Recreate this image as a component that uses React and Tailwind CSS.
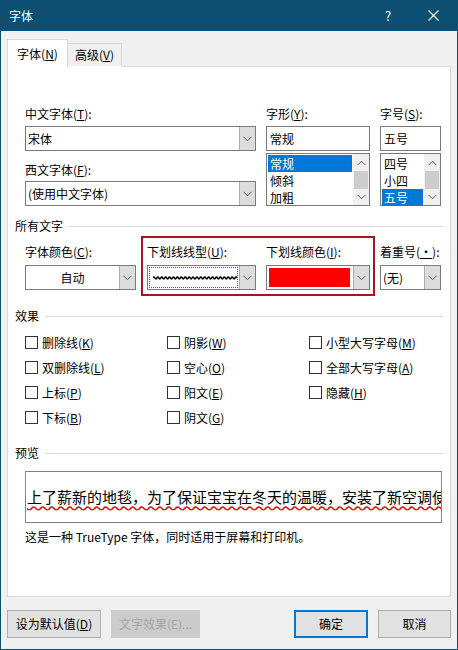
import React from "react";

const FONT = "'Noto Sans CJK SC', 'Noto Sans', sans-serif";

function Chevron({ className = "" }) {
  return (
    <svg width="9" height="6" viewBox="0 0 9 6" className={className}>
      <path d="M0.5 0.8 L4.5 4.8 L8.5 0.8" fill="none" stroke="#606060" strokeWidth="1" />
    </svg>
  );
}

function Combo({ children, center = false, focus = false }) {
  return (
    <div className="h-[25px] flex border border-[#7a7a7a] bg-white">
      <div
        className={
          "flex-1 flex items-center min-w-0 " +
          (center ? "justify-center " : "pl-[2px] ") +
          (focus ? "m-[1px] border border-dotted border-[#1f5fa8]" : "")
        }
      >
        {children}
      </div>
      <div className="w-[16px] bg-[#dcdcdc] border-l border-[#adadad] flex items-center justify-center">
        <Chevron />
      </div>
    </div>
  );
}

function Label({ children }) {
  return <div className="h-[16px] leading-[16px] whitespace-nowrap">{children}</div>;
}

function Scroll() {
  return (
    <div className="w-[16px] flex flex-col bg-[#f0f0f0]">
      <div className="h-[17px] flex items-center justify-center">
        <Chevron className="rotate-180" />
      </div>
      <div className="h-[18px] mx-[1px] bg-[#cdcdcd]" />
      <div className="flex-1 flex items-center justify-center">
        <Chevron />
      </div>
    </div>
  );
}

function ListBox({ items, selected, itemWidth }) {
  return (
    <div className="h-[53px] flex border border-[#7a7a7a] bg-white">
      <div className="flex-1 pt-[1px] pl-[1px]">
        {items.map((it, i) => (
          <div
            key={it}
            className={
              "h-[17px] leading-[17px] pl-[2px] " +
              (i === selected ? "bg-[#0078d7] text-white " : "") +
              itemWidth
            }
          >
            {it}
          </div>
        ))}
      </div>
      <Scroll />
    </div>
  );
}

function Section({ title }) {
  return (
    <div className="h-[16px] flex items-center pr-[7px]">
      <span className="leading-[16px]">{title}</span>
      <div className="flex-1 h-px bg-[#dcdcdc] ml-[6px]" />
    </div>
  );
}

function Check({ children }) {
  return (
    <div className="h-[25px] flex items-center whitespace-nowrap">
      <div className="w-[13px] h-[13px] border border-[#333] bg-white mr-[4px]" />
      <span>{children}</span>
    </div>
  );
}

function Btn({ children, className = "" }) {
  return (
    <div className={"h-[28px] flex items-center justify-center border " + className}>
      {children}
    </div>
  );
}

export default function App() {
  return (
    <div
      className="w-[458px] h-[650px] bg-[#f0f0f0] border-x border-b border-[#0c4f72] flex flex-col text-[12px] text-black overflow-hidden"
      style={{ fontFamily: FONT }}
    >
      {/* title bar */}
      <div className="h-[31px] -mx-px bg-[#0c4f72] text-white flex items-center pl-[9px] shrink-0">
        <span className="flex-1">字体</span>
        <span className="w-[14px] text-center mr-[33px] text-[13px]">?</span>
        <svg width="11" height="11" viewBox="0 0 11 11" className="mr-[19px]">
          <path d="M0.5 0.5 L10.5 10.5 M10.5 0.5 L0.5 10.5" stroke="#fff" strokeWidth="1.1" />
        </svg>
      </div>

      <div className="px-[6px] pt-[8px] flex flex-col">
        {/* tabs */}
        <div className="flex items-end h-[28px] relative z-10 -mb-px">
          <div className="h-[28px] w-[61px] bg-white border border-b-0 border-[#d9d9d9] flex items-center justify-center">
            字体(<u>N</u>)
          </div>
          <div className="h-[24px] w-[54px] bg-[#f0f0f0] border border-l-0 border-[#d9d9d9] border-b-white flex items-center justify-center">
            高级(<u>V</u>)
          </div>
        </div>

        {/* panel */}
        <div className="h-[531px] bg-white border border-[#d9d9d9] pl-[7px] pt-[39px]">
          <div className="ml-[10px] flex gap-[10px]">
            <div className="w-[231px] flex flex-col">
              <Label>中文字体(<u>T</u>):</Label>
              <div className="mt-[4px]">
                <Combo>宋体</Combo>
              </div>
              <div className="mt-[11px]">
                <Label>西文字体(<u>F</u>):</Label>
              </div>
              <div className="mt-[3px]">
                <Combo>(使用中文字体)</Combo>
              </div>
            </div>
            <div className="w-[104px] flex flex-col">
              <Label>字形(<u>Y</u>):</Label>
              <div className="mt-[4px] h-[25px] border border-[#7a7a7a] flex items-center pl-[3px]">常规</div>
              <div className="mt-[2px]">
                <ListBox items={["常规", "倾斜", "加粗"]} selected={0} itemWidth="w-[84px]" />
              </div>
            </div>
            <div className="w-[61px] flex flex-col">
              <Label>字号(<u>S</u>):</Label>
              <div className="mt-[4px] h-[25px] border border-[#7a7a7a] flex items-center pl-[3px]">五号</div>
              <div className="mt-[2px]">
                <ListBox items={["四号", "小四", "五号"]} selected={2} itemWidth="w-[41px]" />
              </div>
            </div>
          </div>

          <div className="mt-[12px]">
            <Section title="所有文字" />
          </div>

          <div className="mt-[2px] ml-[10px] flex items-start gap-[5px]">
            <div className="w-[111px] pt-[8px]">
              <Label>字体颜色(<u>C</u>):</Label>
              <div className="mt-[5px]">
                <Combo center>自动</Combo>
              </div>
            </div>
            <div className="border-2 border-[#a5161e] pl-[4px] pr-[3px] pt-[6px] pb-[4px] flex gap-[10px]">
              <div className="w-[109px]">
                <Label>下划线线型(<u>U</u>):</Label>
                <div className="mt-[5px]">
                  <Combo focus>
                    <svg width="86" height="6" viewBox="0 0 86 6" className="ml-[1px]">
                      <path
                        d="M0 3 q1 -2 2 0 t2 0 t2 0 t2 0 t2 0 t2 0 t2 0 t2 0 t2 0 t2 0 t2 0 t2 0 t2 0 t2 0 t2 0 t2 0 t2 0 t2 0 t2 0 t2 0 t2 0 t2 0 t2 0 t2 0 t2 0 t2 0 t2 0 t2 0 t2 0 t2 0 t2 0 t2 0 t2 0 t2 0 t2 0 t2 0 t2 0 t2 0 t2 0 t2 0 t2 0 t2 0 t2 0"
                        fill="none"
                        stroke="#000"
                        strokeWidth="1.7"
                      />
                    </svg>
                  </Combo>
                </div>
              </div>
              <div className="w-[104px]">
                <Label>下划线颜色(<u>I</u>):</Label>
                <div className="mt-[5px] h-[25px] flex border border-[#7a7a7a] bg-white">
                  <div className="flex-1 p-[2px] pr-[3px]">
                    <div className="h-full bg-[#ff0000]" />
                  </div>
                  <div className="w-[16px] bg-[#dcdcdc] border-l border-[#adadad] flex items-center justify-center">
                    <Chevron />
                  </div>
                </div>
              </div>
            </div>
            <div className="w-[61px] pt-[8px]">
              <Label>
                着重号(<u>·</u>):
              </Label>
              <div className="mt-[5px]">
                <Combo>(无)</Combo>
              </div>
            </div>
          </div>

          <div className="mt-[12px]">
            <Section title="效果" />
          </div>

          <div className="mt-[6px] ml-[10px] grid grid-cols-[142px_142px_1fr]">
            <Check>删除线(<u>K</u>)</Check>
            <Check>阴影(<u>W</u>)</Check>
            <Check>小型大写字母(<u>M</u>)</Check>
            <Check>双删除线(<u>L</u>)</Check>
            <Check>空心(<u>O</u>)</Check>
            <Check>全部大写字母(<u>A</u>)</Check>
            <Check>上标(<u>P</u>)</Check>
            <Check>阳文(<u>E</u>)</Check>
            <Check>隐藏(<u>H</u>)</Check>
            <Check>下标(<u>B</u>)</Check>
            <Check>阴文(<u>G</u>)</Check>
          </div>

          <div className="mt-[15px]">
            <Section title="预览" />
          </div>

          <div className="mt-[10px] ml-[10px] w-[417px] h-[52px] border border-[#828282] flex items-center overflow-hidden">
            <span className="pl-[1px] text-[15px] leading-[20px] whitespace-nowrap underline decoration-wavy decoration-[#ff0000] underline-offset-[2px]">
              上了薪新的地毯，为了保证宝宝在冬天的温暖，安装了新空调使室温
            </span>
          </div>

          <div className="mt-[6px] ml-[10px] h-[16px] leading-[16px]">
            这是一种 TrueType 字体，同时适用于屏幕和打印机。
          </div>
        </div>

        {/* buttons */}
        <div className="mt-[13px] flex">
          <Btn className="w-[94px] bg-[#e1e1e1] border-[#adadad]">
            设为默认值(<u>D</u>)
          </Btn>
          <Btn className="w-[89px] ml-[10px] bg-[#cccccc] border-[#cccccc] text-[#a6a6a6]">
            文字效果(E)...
          </Btn>
          <Btn className="w-[74px] ml-auto bg-[#e1e1e1] border-2 border-[#0078d7]">确定</Btn>
          <Btn className="w-[73px] ml-[10px] bg-[#e1e1e1] border-[#adadad]">取消</Btn>
        </div>
      </div>
    </div>
  );
}
